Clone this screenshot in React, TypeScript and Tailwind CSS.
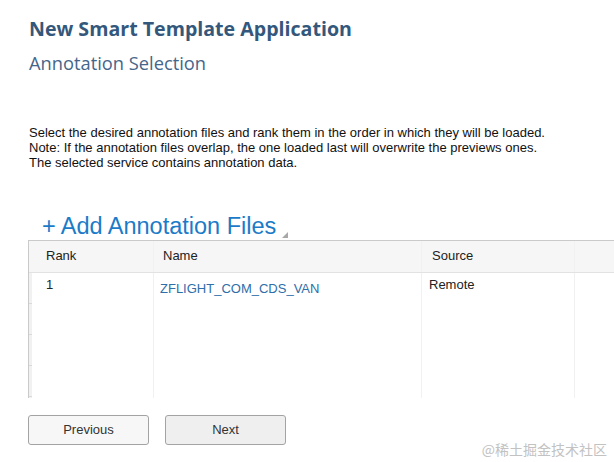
import React from 'react';

const cols = [
  { key: 'rank', label: 'Rank', w: 'w-[121px]', hp: 'pl-[14px]', dp: 'pl-[14px] pt-[4px]' },
  { key: 'name', label: 'Name', w: 'w-[268px] border-l border-[#f1f1f1]', hp: 'pl-[9px]', dp: 'pl-[6px] pt-[8px]' },
  { key: 'source', label: 'Source', w: 'w-[153px] border-l border-[#f1f1f1]', hp: 'pl-[10px]', dp: 'pl-[7px] pt-[4px]' },
];

const rows = [{ rank: '1', name: 'ZFLIGHT_COM_CDS_VAN', source: 'Remote' }];

export default function App() {
  return (
    <div className="relative w-[614px] h-[462px] overflow-hidden bg-white font-['Liberation_Sans',Arial,sans-serif]">
      <div className="pl-[29px] pt-[15px] font-['Open_Sans',sans-serif]">
        <h1 className="text-[19.6px] leading-[28px] font-bold text-[#34587c]">New Smart Template Application</h1>
        <h2 className="mt-[8px] text-[18.3px] leading-[24px] font-normal text-[#45668a]">Annotation Selection</h2>
      </div>

      <div className="mt-[50px] pl-[29px] text-[13px] leading-[15px] text-[#111]">
        <p>Select the desired annotation files and rank them in the order in which they will be loaded.</p>
        <p>Note: If the annotation files overlap, the one loaded last will overwrite the previews ones.</p>
        <p>The selected service contains annotation data.</p>
      </div>

      <div className="mt-[42px] pl-[42px] flex items-end h-[28px]">
        <button className="flex items-baseline gap-[5px] text-[23.5px] leading-[28px] text-[#1b7bc8]">
          <span>+</span>
          <span>Add Annotation Files</span>
        </button>
        <svg className="ml-[6px] mb-[2px]" width="6" height="6" viewBox="0 0 6 6">
          <path d="M6 0 L6 6 L0 6 Z" fill="#a8a8a8" />
        </svg>
      </div>

      <div className="ml-[28px] w-[600px] border-t border-l border-[#cacaca] text-[13px] text-[#222]">
        <div className="flex h-[32px] bg-[#f6f6f6] border-b border-[#e2e2e2]">
          <div className="w-[3px]" />
          {cols.map(c => (
            <div key={c.key} className={`${c.w} ${c.hp} leading-[30px]`}>{c.label}</div>
          ))}
          <div className="flex-1 border-l border-[#f1f1f1]" />
        </div>
        <div className="flex h-[125px]">
          <div className="w-[3px] bg-[#f1f1f1] flex flex-col">
            {[0, 1, 2, 3].map(i => (
              <div key={i} className="h-[31px] border-b border-[#dadada]" />
            ))}
          </div>
          {cols.map(c => (
            <div key={c.key} className={`${c.w} ${c.dp} leading-[16px]`}>
              {rows.map(r => (
                <div key={r.rank} className={c.key === 'name' ? 'text-[#2e6ea9]' : ''}>
                  {r[c.key as keyof typeof r]}
                </div>
              ))}
            </div>
          ))}
          <div className="flex-1 border-l border-[#f1f1f1]" />
        </div>
      </div>

      <div className="mt-[17px] ml-[28px] flex gap-[16px]">
        <button className="w-[121px] h-[30px] border border-[#a3a3a3] rounded-[3px] bg-[#f7f7f7] text-[13px] text-[#333]">Previous</button>
        <button className="w-[121px] h-[30px] border border-[#a3a3a3] rounded-[3px] bg-[#efefef] text-[13px] text-[#333]">Next</button>
      </div>

      <div className="absolute right-[7px] bottom-[5px] text-[14px] leading-[16px] text-[#c2c2c2] font-['Noto_Sans_CJK_SC',sans-serif]">
        @稀土掘金技术社区
      </div>
    </div>
  );
}
